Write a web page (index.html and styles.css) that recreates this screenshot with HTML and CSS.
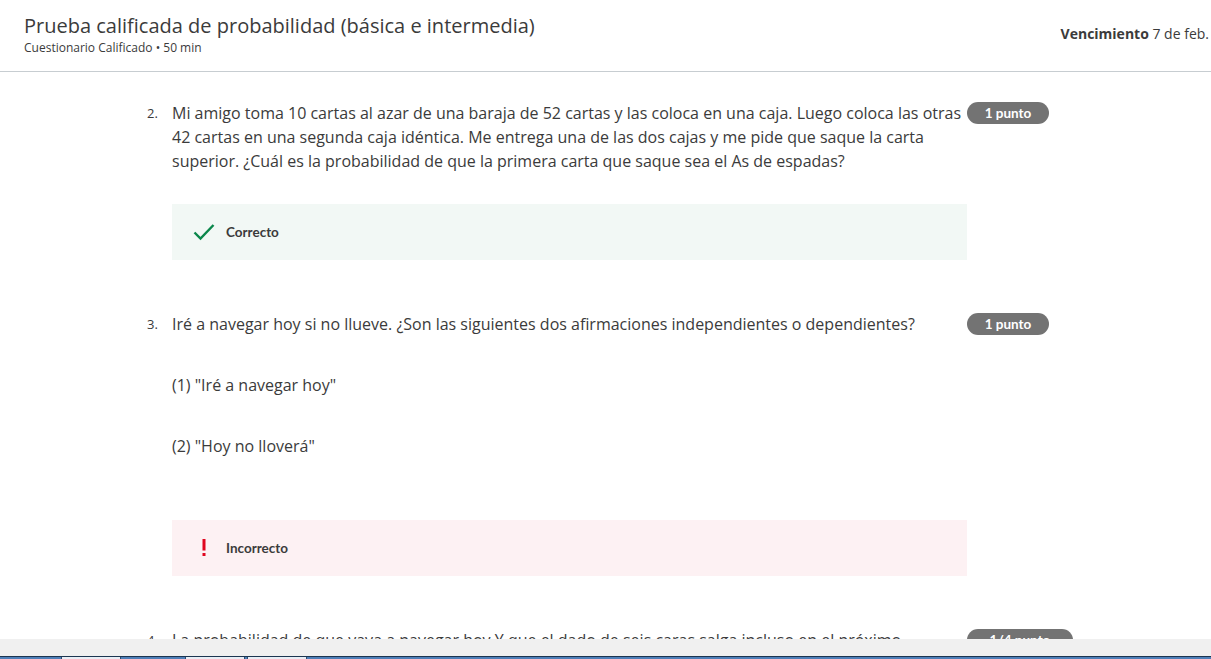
FILE: index.html
```html
<!DOCTYPE html>
<html lang="es">
<head>
<meta charset="utf-8">
<title>Prueba calificada de probabilidad</title>
<link rel="stylesheet" href="styles.css">
</head>
<body>
<header class="top">
  <div class="top-left">
    <h1 class="title">Prueba calificada de probabilidad (básica e intermedia)</h1>
    <div class="subtitle">Cuestionario Calificado • 50 min</div>
  </div>
  <div class="due"><b>Vencimiento</b> 7 de feb.</div>
</header>

<main class="quiz">
  <section class="question q2">
    <div class="q-row">
      <span class="q-num">2.</span>
      <p class="q-text">Mi amigo toma 10 cartas al azar de una baraja de 52 cartas y las coloca en una caja. Luego coloca las otras 42 cartas en una segunda caja idéntica. Me entrega una de las dos cajas y me pide que saque la carta superior. ¿Cuál es la probabilidad de que la primera carta que saque sea el As de espadas?</p>
      <span class="badge">1 punto</span>
    </div>
    <div class="feedback ok">
      <svg class="fb-icon" width="22" height="18" viewBox="0 0 22 18"><path d="M1.5 9.5 L7.5 15.5 L20.5 2" fill="none" stroke="#0b874b" stroke-width="2.4"/></svg>
      <span class="fb-label">Correcto</span>
    </div>
  </section>

  <section class="question q3">
    <div class="q-row">
      <span class="q-num">3.</span>
      <p class="q-text">Iré a navegar hoy si no llueve. ¿Son las siguientes dos afirmaciones independientes o dependientes?</p>
      <span class="badge">1 punto</span>
    </div>
    <p class="q-para">(1) "Iré a navegar hoy"</p>
    <p class="q-para">(2) "Hoy no lloverá"</p>
    <div class="feedback bad">
      <svg class="fb-icon bang" width="22" height="18" viewBox="0 0 22 18"><rect x="9.5" y="0" width="3" height="11.5" fill="#e0061f"/><rect x="9.5" y="14" width="3" height="3" fill="#e0061f"/></svg>
      <span class="fb-label">Incorrecto</span>
    </div>
  </section>

  <section class="question q4">
    <div class="q-row">
      <span class="q-num">4.</span>
      <p class="q-text">La probabilidad de que vaya a navegar hoy Y que el dado de seis caras salga incluso en el próximo lanzamiento es</p>
      <span class="badge wide">1/4 punto</span>
    </div>
  </section>
</main>

<div class="statusbar">
  <div class="status-gray"></div>
  <div class="taskbar">
    <span class="tab t1"></span>
    <span class="tab t2"></span>
    <span class="tab t3"></span>
  </div>
</div>
</body>
</html>
```

FILE: styles.css
```css
* { box-sizing: border-box; }
html, body { margin: 0; padding: 0; }
body {
  background: #fff;
  font-family: "Open Sans", "DejaVu Sans", sans-serif;
  color: #333;
  overflow: hidden;
  height: 659px;
}

.top {
  height: 72px;
  border-bottom: 1px solid #c7cdd1;
  display: flex;
  justify-content: space-between;
  align-items: flex-start;
  padding: 12px 2px 0 24px;
}
.title {
  margin: 0;
  font-size: 20px;
  font-weight: 400;
  line-height: 28px;
  color: #3b3b3b;
}
.subtitle {
  font-size: 12px;
  line-height: 15px;
  color: #3b3b3b;
  margin-top: 0;
}
.due {
  font-size: 14px;
  line-height: 18px;
  margin-top: 13px;
  color: #3b3b3b;
}
.due b { font-weight: 700; }

.quiz {
  padding-left: 145px;
  padding-top: 29px;
}
.question { width: 930px; }
.q-row {
  display: flex;
  align-items: flex-start;
}
.q-num {
  width: 27px;
  font-size: 13px;
  line-height: 24px;
  color: #3b3b3b;
  padding-left: 2px;
}
.q-text {
  margin: 0;
  width: 795px;
  font-size: 16px;
  line-height: 24px;
  color: #3b3b3b;
}
.badge {
  margin-top: 1px;
  width: 82px;
  height: 22px;
  border-radius: 11px;
  background: #737373;
  color: #fff;
  font-family: Lato, "Liberation Sans", sans-serif;
  font-weight: 700;
  font-size: 13.5px;
  line-height: 22px;
  text-align: center;
}
.badge.wide { width: 106px; }

.q-para {
  margin: 37px 0 0 27px;
  font-size: 16px;
  line-height: 24px;
  color: #3b3b3b;
}

.feedback {
  margin-left: 27px;
  width: 795px;
  height: 56px;
  display: flex;
  align-items: center;
  padding-left: 21px;
}
.feedback.ok { background: #f2f8f5; margin-top: 31px; }
.feedback.bad { background: #fdf1f3; margin-top: 62px; }
.fb-icon { flex: none; }
.fb-label {
  margin-left: 11px;
  font-family: Lato, "Liberation Sans", sans-serif;
  font-weight: 700;
  font-size: 13.5px;
  color: #3b3b3b;
}

.q3 { margin-top: 52px; }
.q4 { margin-top: 52px; }

.statusbar {
  position: fixed;
  left: 0;
  right: 0;
  bottom: 0;
  height: 20px;
}
.status-gray {
  height: 17px;
  background: #f0f0f0;
}
.taskbar {
  height: 3px;
  background: #4f7fb8;
  border-top: 1px solid #1c3550;
  position: relative;
}
.tab {
  position: absolute;
  top: 0;
  height: 2px;
  background: #e8eef5;
  border-left: 1px solid #2a4a70;
  border-right: 1px solid #2a4a70;
}
.t1 { left: 61px; width: 60px; }
.t2 { left: 185px; width: 60px; }
.t3 { left: 247px; width: 60px; }
```
